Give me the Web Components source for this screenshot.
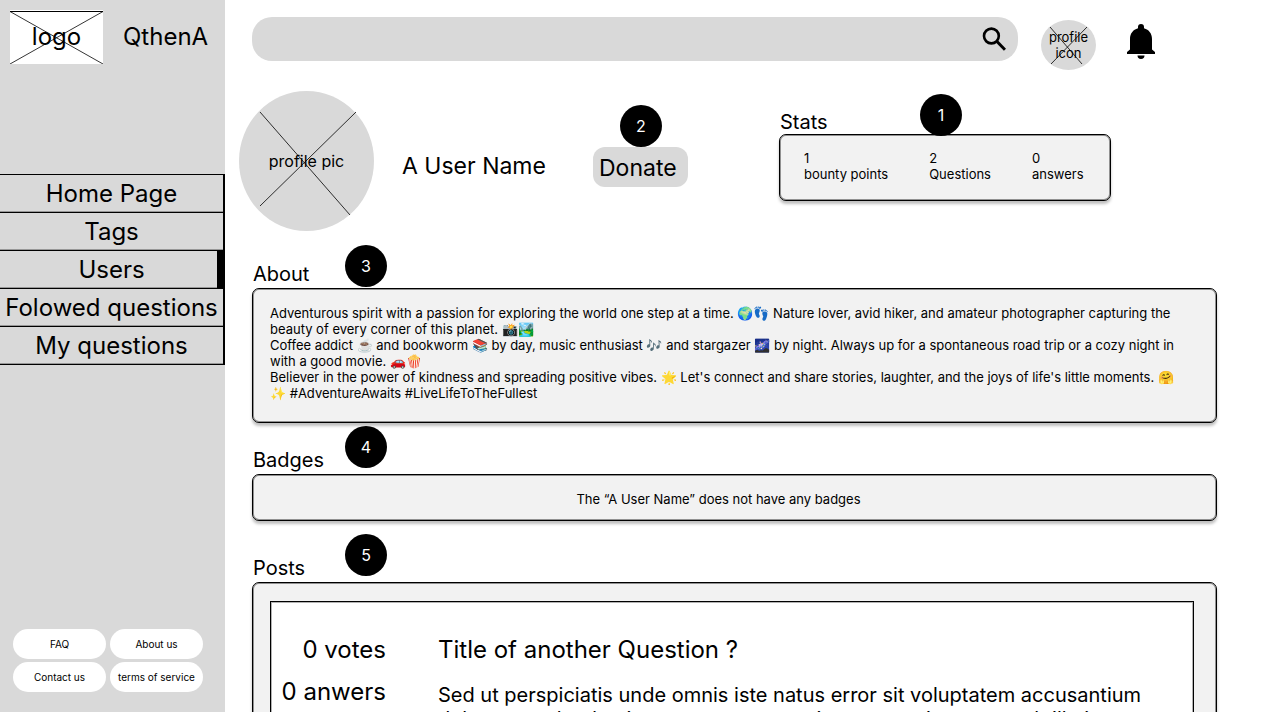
<!DOCTYPE html>
<html lang="en">
<head>
<meta charset="utf-8">
<title>QthenA – A User Name</title>
<style>
  body { margin: 0; font-family: Inter, sans-serif; color: #000; background: #fff; --display-weight: 400; }
</style>
</head>
<body>
<qa-app></qa-app>
<script>
const define = (name, html) => {
  const template = document.createElement('template');
  template.innerHTML = html;
  customElements.define(name, class extends HTMLElement {
    constructor() {
      super();
      this.attachShadow({ mode: 'open' }).append(template.content.cloneNode(true));
    }
  });
};

define('qa-marker', `
<style>
  :host { display: grid; place-items: center; width: 42px; height: 42px; border-radius: 50%; background: #000; color: #fff; font-size: 16px; line-height: 20px; font-weight: var(--display-weight); }
</style><slot></slot>`);

define('qa-panel', `
<style>
  :host { display: block; box-sizing: border-box; border: 1px solid #000; border-radius: 7px; background: #f2f2f2;
    box-shadow: inset 0 0 0 1px rgba(0,0,0,.4), 0 3px 3px rgba(0,0,0,.25); font-size: 13px; line-height: 16px; }
</style><slot></slot>`);

define('qa-section', `
<style>
  :host { display: block; position: relative; }
  h2 { margin: 0; font-size: 20px; line-height: var(--title-height, 28px); font-weight: var(--display-weight); padding-left: 1px; }
  ::slotted(qa-marker) { position: absolute; left: var(--marker-left, 93px); top: var(--marker-top, -20px); }
</style>
<h2><slot name="title"></slot></h2>
<slot name="marker"></slot>
<slot></slot>`);

define('qa-nav-item', `
<style>
  :host { display: block; position: relative; border-bottom: 1px solid #000; box-shadow: inset 0 -1px rgba(0,0,0,.3); }
  :host([current])::after { content: ""; position: absolute; inset: 0 0 0 auto; width: 6px; background: #000; }
  ::slotted(a) { display: block; color: inherit; text-decoration: none; text-align: center; font-size: 24px; line-height: 37px; font-weight: var(--display-weight); white-space: nowrap; }
</style><slot></slot>`);

define('qa-sidebar', `
<style>
  :host { display: flex; flex-direction: column; box-sizing: border-box; width: 225px; flex: none; height: 100vh; background: #d9d9d9; }
  .brand { display: flex; align-items: center; gap: 20px; padding: 10px 0 0 10px; font-size: 24px; line-height: 28px; font-weight: var(--display-weight); }
  .logo { display: grid; place-items: center; width: 93px; height: 54px; background: #fff; }
  .logo > * { grid-area: 1 / 1; }
  .logo svg { width: 93px; height: 54px; }
  nav { margin-top: 110px; border-top: 1px solid #000; border-right: 2px solid #000; }
  footer { margin-top: auto; padding: 0 22px 20px 13px; display: grid; grid-template-columns: 1fr 1fr; gap: 3px 4px; }
  footer a { display: block; background: #fff; border-radius: 15px; text-align: center; font-size: 10px; line-height: 30px; color: #000; text-decoration: none; white-space: nowrap; }
</style>
<div class="brand">
  <div class="logo"><span>logo</span>
    <svg viewBox="0 0 93 54" fill="none" stroke="#000" aria-hidden="true"><path d="M0 1.5H93"/><path d="M0 1.5L93 54M0 54L93 1.5" stroke-width=".8"/></svg>
  </div>
  <span>QthenA</span>
</div>
<nav>
  <qa-nav-item><a href="#home">Home Page</a></qa-nav-item>
  <qa-nav-item><a href="#tags">Tags</a></qa-nav-item>
  <qa-nav-item current><a href="#users" aria-current="page">Users</a></qa-nav-item>
  <qa-nav-item><a href="#followed">Folowed questions</a></qa-nav-item>
  <qa-nav-item><a href="#mine">My questions</a></qa-nav-item>
</nav>
<footer>
  <a href="#faq">FAQ</a><a href="#about">About us</a>
  <a href="#contact">Contact us</a><a href="#terms">terms of service</a>
</footer>`);

define('qa-topbar', `
<style>
  :host { display: flex; align-items: flex-start; padding: 17px 62px 0 13px; }
  form { flex: 1; display: flex; align-items: center; height: 44px; box-sizing: border-box; border-radius: 20px; background: #d9d9d9; padding: 0 12px 0 20px; }
  input { flex: 1; min-width: 0; border: 0; outline: 0; background: none; font: 16px/20px Inter, sans-serif; }
  button { border: 0; padding: 0; background: none; display: block; }
  svg { display: block; }
  .profile { display: grid; place-items: center; width: 55px; height: 50px; margin: 3px 31px 0 23px; border-radius: 50%; background: #d9d9d9; font-size: 13px; line-height: 16px; text-align: center; color: #000; text-decoration: none; }
  .profile > * { grid-area: 1 / 1; }
  .bell { margin-top: 7px; }
</style>
<form role="search">
  <input type="search" aria-label="Search">
  <button type="button" aria-label="Search"><svg width="24" height="24" viewBox="0 0 24 24" fill="none" stroke="#000" stroke-width="2.6"><circle cx="9.400" cy="9" r="7.400"/><path d="M15 14.500L23 22.800" stroke-width="3"/></svg></button>
</form>
<a class="profile" href="#profile"><span>profile<br>icon</span>
  <svg width="55" height="50" viewBox="0 0 55 50" stroke="#000" stroke-width=".8" aria-hidden="true"><path d="M9 7L41 44M46 7L10 44"/></svg>
</a>
<button class="bell" type="button" aria-label="Notifications"><svg width="28" height="36" viewBox="0 0 28 36"><path d="M14 0a3 3 0 0 1 3 3v1.300c5 1.400 8 5.400 8 10.700v10.500l3 2.500v2H0v-2l3-2.500V15C3 9.700 6 5.700 11 4.300V3a3 3 0 0 1 3-3zM10.500 31.500h7a3.500 3.500 0 0 1-7 0z"/></svg></button>`);

define('qa-profile', `
<style>
  :host { display: grid; grid-template-columns: 135px 219fr 95px 91fr 332px 106fr; align-items: start; padding-top: 21px; }
  .pic { display: grid; place-items: center; width: 135px; height: 140px; border-radius: 50%; background: #d9d9d9; font-size: 16px; line-height: 20px; font-weight: var(--display-weight); }
  .pic > * { grid-area: 1 / 1; }
  h1 { margin: 60px 0 0 28px; font-size: 23px; line-height: 30px; font-weight: var(--display-weight); white-space: nowrap; }
  .donate { position: relative; margin-top: 56px; }
  .donate button { display: block; width: 100%; height: 40px; border: 0; border-radius: 12px; background: #d9d9d9; padding: 2px 6px 0; font: 23px/38px Inter, sans-serif; font-weight: var(--display-weight); text-align: left; color: #000; }
  .donate qa-marker { position: absolute; left: 27px; bottom: 40px; }
  .stats { grid-column: 5; margin-top: 19px; --title-height: 24px; --marker-top: -16px; --marker-left: 141px; }
  dl { margin: 0; padding: 15px 24px 18px; display: flex; gap: 41px; }
  dl div { display: flex; flex-direction: column-reverse; }
  dd { margin: 0; }
</style>
<div class="pic"><span>profile pic</span>
  <svg width="135" height="140" viewBox="0 0 135 140" stroke="#000" stroke-width=".8" aria-hidden="true"><path d="M21 21L111 124M117 21L21 115"/></svg>
</div>
<h1>A User Name</h1>
<div class="donate"><qa-marker>2</qa-marker><button type="button">Donate</button></div>
<qa-section class="stats">
  <span slot="title">Stats</span><qa-marker slot="marker">1</qa-marker>
  <qa-panel><dl>
    <div><dt>bounty points</dt><dd>1</dd></div>
    <div><dt>Questions</dt><dd>2</dd></div>
    <div><dt>answers</dt><dd>0</dd></div>
  </dl></qa-panel>
</qa-section>`);

define('qa-question', `
<style>
  :host { display: grid; grid-template-columns: 115px 1fr; column-gap: 52px; box-sizing: border-box; border: 1px solid #000; background: #fff; padding: 33px 12px 33px 0; box-shadow: inset 0 0 0 1px rgba(0,0,0,.3); font-size: 24px; line-height: 30px; font-weight: var(--display-weight); }
  ul { list-style: none; margin: 0; padding: 0; text-align: right; white-space: nowrap; }
  li + li { margin-top: 12px; }
  h3 { margin: 0; font-size: 24px; font-weight: inherit; line-height: 30px; }
  p { margin: 18px 0 0; font-size: 20px; line-height: 24px; }
</style>
<ul><li><slot name="votes"></slot></li><li><slot name="answers"></slot></li></ul>
<div><h3><slot name="title"></slot></h3><p><slot></slot></p></div>`);

define('qa-app', `
<style>
  :host { display: flex; height: 100vh; overflow: hidden; }
  main { flex: 1; min-width: 0; padding: 0 49px 0 14px; overflow: auto; scrollbar-width: none; }
  .sections { padding: 29px 0 40px 13px; display: flex; flex-direction: column; gap: 23px; }
  .about { --marker-top: -15px; }
  .bio { padding: 16px 30px 21px 17px; }
  .bio p { margin: 0; }
  .none { margin: 0; padding: 16px 32px 13px 0; text-align: center; }
  .posts { margin-top: 10px; }
  .list { padding: 18px 22px 24px 17px; }
</style>
<qa-sidebar></qa-sidebar>
<main>
  <qa-topbar></qa-topbar>
  <qa-profile></qa-profile>
  <div class="sections">
    <qa-section class="about"><span slot="title">About</span><qa-marker slot="marker">3</qa-marker>
      <qa-panel><div class="bio">
        <p>Adventurous spirit with a passion for exploring the world one step at a time. 🌍👣 Nature lover, avid hiker, and amateur photographer capturing the beauty of every corner of this planet. 📸🏞️</p>
        <p>Coffee addict ☕ and bookworm 📚 by day, music enthusiast 🎶 and stargazer 🌌 by night. Always up for a spontaneous road trip or a cozy night in with a good movie. 🚗🍿</p>
        <p>Believer in the power of kindness and spreading positive vibes. 🌟 Let's connect and share stories, laughter, and the joys of life's little moments. 🤗✨ #AdventureAwaits #LiveLifeToTheFullest</p>
      </div></qa-panel>
    </qa-section>
    <qa-section><span slot="title">Badges</span><qa-marker slot="marker">4</qa-marker>
      <qa-panel><p class="none">The “A User Name” does not have any badges</p></qa-panel>
    </qa-section>
    <qa-section class="posts"><span slot="title">Posts</span><qa-marker slot="marker">5</qa-marker>
      <qa-panel><div class="list">
        <qa-question>
          <span slot="votes">0 votes</span><span slot="answers">0 anwers</span>
          <span slot="title">Title of another Question ?</span>
          Sed ut perspiciatis unde omnis iste natus error sit voluptatem accusantium doloremque laudantium, totam rem aperiam, eaque ipsa quae ab illo inventore veritatis
        </qa-question>
      </div></qa-panel>
    </qa-section>
  </div>
</main>`);
</script>
</body>
</html>
